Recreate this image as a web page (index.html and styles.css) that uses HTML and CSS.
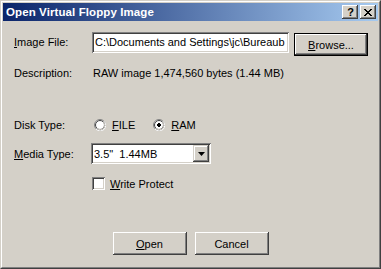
FILE: index.html
```html
<!DOCTYPE html>
<html>
<head>
<meta charset="utf-8">
<link rel="stylesheet" href="styles.css">
</head>
<body>
<div class="window">
  <div class="frame">
    <div class="titlebar">
      <span class="title">Open Virtual Floppy Image</span>
      <div class="tb-buttons">
        <div class="tb-btn help">?</div>
        <div class="tb-btn close">
          <svg width="8" height="7" viewBox="0 0 8 7"><path d="M0 0h2v1h1v1h2V1h1V0h2v1H7v1H6v1H5v1h1v1h1v1h1v1H6V6H5V5H3v1H2v1H0V6h1V5h1V4h1V3H2V2H1V1H0z" fill="#000"/></svg>
        </div>
      </div>
    </div>
    <div class="content">
      <div class="row row-file">
        <div class="label"><u>I</u>mage File:</div>
        <div class="field">
          <div class="textbox">C:\Documents and Settings\jc\Bureaub</div>
          <div class="btn default"><span><u>B</u>rowse...</span></div>
        </div>
      </div>
      <div class="row row-desc">
        <div class="label">Description:</div>
        <div class="field">RAW image 1,474,560 bytes (1.44 MB)</div>
      </div>
      <div class="row row-disk">
        <div class="label">Disk Type:</div>
        <div class="field radios">
          <div class="option">
            <svg class="radio" width="12" height="12" viewBox="0 0 12 12">
              <circle cx="6" cy="6" r="5.5" fill="#fff" stroke="#808080"/>
              <path d="M10.2 2.4 A5.5 5.5 0 0 1 2.1 10.2" fill="none" stroke="#fff"/>
              <circle cx="6" cy="6" r="4.5" fill="#fff" stroke="#404040"/>
              <path d="M9.4 3 A4.5 4.5 0 0 1 3 9.4" fill="none" stroke="#d4d0c8"/>
            </svg>
            <span><u>F</u>ILE</span>
          </div>
          <div class="option">
            <svg class="radio" width="12" height="12" viewBox="0 0 12 12">
              <circle cx="6" cy="6" r="5.5" fill="#fff" stroke="#808080"/>
              <path d="M10.2 2.4 A5.5 5.5 0 0 1 2.1 10.2" fill="none" stroke="#fff"/>
              <circle cx="6" cy="6" r="4.5" fill="#fff" stroke="#404040"/>
              <path d="M9.4 3 A4.5 4.5 0 0 1 3 9.4" fill="none" stroke="#d4d0c8"/>
              <rect x="4" y="5" width="4" height="2" fill="#000"/>
              <rect x="5" y="4" width="2" height="4" fill="#000"/>
            </svg>
            <span><u>R</u>AM</span>
          </div>
        </div>
      </div>
      <div class="row row-media">
        <div class="label"><u>M</u>edia Type:</div>
        <div class="field">
          <div class="combo">
            <span class="combo-text">3.5"&nbsp; 1.44MB</span>
            <div class="combo-btn">
              <svg width="7" height="4" viewBox="0 0 7 4"><path d="M0 0h7L3.5 4z" fill="#000"/></svg>
            </div>
          </div>
        </div>
      </div>
      <div class="row row-wp">
        <div class="label"></div>
        <div class="field option">
          <div class="checkbox"></div>
          <span><u>W</u>rite Protect</span>
        </div>
      </div>
      <div class="actions">
        <div class="btn"><span><u>O</u>pen</span></div>
        <div class="btn"><span>Cancel</span></div>
      </div>
    </div>
  </div>
</div>
</body>
</html>
```
FILE: styles.css
```css
html, body {
  margin: 0;
  padding: 0;
  background: #d4d0c8;
}
body {
  font-family: "Liberation Sans", Arial, sans-serif;
  font-size: 11px;
  color: #000;
}
.window {
  width: 381px;
  height: 269px;
  box-sizing: border-box;
  border: 1px solid;
  border-color: #d4d0c8 #404040 #404040 #d4d0c8;
  background: #d4d0c8;
}
.frame {
  height: 100%;
  box-sizing: border-box;
  border: 1px solid;
  border-color: #fff #808080 #808080 #fff;
  padding: 1px;
  display: flex;
  flex-direction: column;
}
.titlebar {
  height: 18px;
  background: linear-gradient(to right, #0a246a, #a6caf0);
  display: flex;
  align-items: center;
  justify-content: space-between;
  padding-left: 3px;
  padding-right: 2px;
}
.title {
  color: #fff;
  font-weight: bold;
  font-size: 11.5px;
  letter-spacing: 0.1px;
}
.tb-buttons {
  display: flex;
  gap: 2px;
}
.tb-btn {
  width: 16px;
  height: 14px;
  box-sizing: border-box;
  background: #d4d0c8;
  box-shadow: inset -1px -1px #404040, inset 1px 1px #fff, inset -2px -2px #808080, inset 2px 2px #d4d0c8;
  display: flex;
  align-items: center;
  justify-content: center;
}
.help {
  font-weight: bold;
  font-size: 11px;
  line-height: 14px;
  padding-left: 1px;
}
.close svg {
  display: block;
}
.content {
  flex: 1;
  padding-left: 11px;
  display: flex;
  flex-direction: column;
}
.row {
  display: flex;
  align-items: center;
}
.label {
  width: 77px;
  flex: none;
}
.field {
  display: flex;
  align-items: center;
}
.row-file {
  margin-top: 11px;
  height: 24px;
  align-items: flex-start;
}
.row-file .label {
  margin-top: 4px;
}
.row-file .field {
  align-items: flex-start;
  margin-left: 1px;
}
.textbox {
  width: 197px;
  height: 21px;
  box-sizing: border-box;
  background: #fff;
  box-shadow: inset 1px 1px #808080, inset -1px -1px #fff, inset 2px 2px #404040, inset -2px -2px #d4d0c8;
  padding: 0 2px 0 3px;
  line-height: 21px;
  white-space: nowrap;
  overflow: hidden;
}
.btn {
  width: 74px;
  height: 23px;
  box-sizing: border-box;
  background: #d4d0c8;
  box-shadow: inset -1px -1px #404040, inset 1px 1px #fff, inset -2px -2px #808080, inset 2px 2px #d4d0c8;
  display: flex;
  align-items: center;
  justify-content: center;
}
.btn.default {
  margin-left: 5px;
  margin-top: 1px;
  box-shadow: inset 0 0 0 1px #000, inset -2px -2px #404040, inset 2px 2px #fff, inset -3px -3px #808080;
}
.row-desc {
  margin-top: 10px;
  height: 14px;
}
.row-desc .field {
  margin-left: 2px;
}
.row-disk {
  margin-top: 38px;
  height: 14px;
}
.radios {
  margin-left: 3px;
}
.option {
  display: flex;
  align-items: center;
}
.radio {
  display: block;
  margin-right: 6px;
}
.radios .option + .option {
  margin-left: 18px;
}
.row-media {
  margin-top: 11px;
  height: 21px;
}
.combo {
  width: 120px;
  height: 21px;
  box-sizing: border-box;
  background: #fff;
  box-shadow: inset 1px 1px #808080, inset -1px -1px #fff, inset 2px 2px #404040, inset -2px -2px #d4d0c8;
  display: flex;
  align-items: center;
  justify-content: space-between;
  padding: 2px;
}
.combo-text {
  padding-left: 1px;
}
.combo-btn {
  width: 16px;
  height: 17px;
  box-sizing: border-box;
  background: #d4d0c8;
  box-shadow: inset -1px -1px #404040, inset 1px 1px #d4d0c8, inset -2px -2px #808080, inset 2px 2px #fff;
  display: flex;
  align-items: center;
  justify-content: center;
}
.combo-btn svg {
  display: block;
}
.row-wp {
  margin-top: 13px;
  height: 13px;
}
.row-wp .field {
  margin-left: 1px;
}
.checkbox {
  width: 13px;
  height: 13px;
  box-sizing: border-box;
  background: #fff;
  box-shadow: inset 1px 1px #808080, inset -1px -1px #fff, inset 2px 2px #404040, inset -2px -2px #d4d0c8;
  margin-right: 5px;
}
.actions {
  margin-top: 42px;
  margin-left: -11px;
  display: flex;
  justify-content: center;
  gap: 8px;
}
```
